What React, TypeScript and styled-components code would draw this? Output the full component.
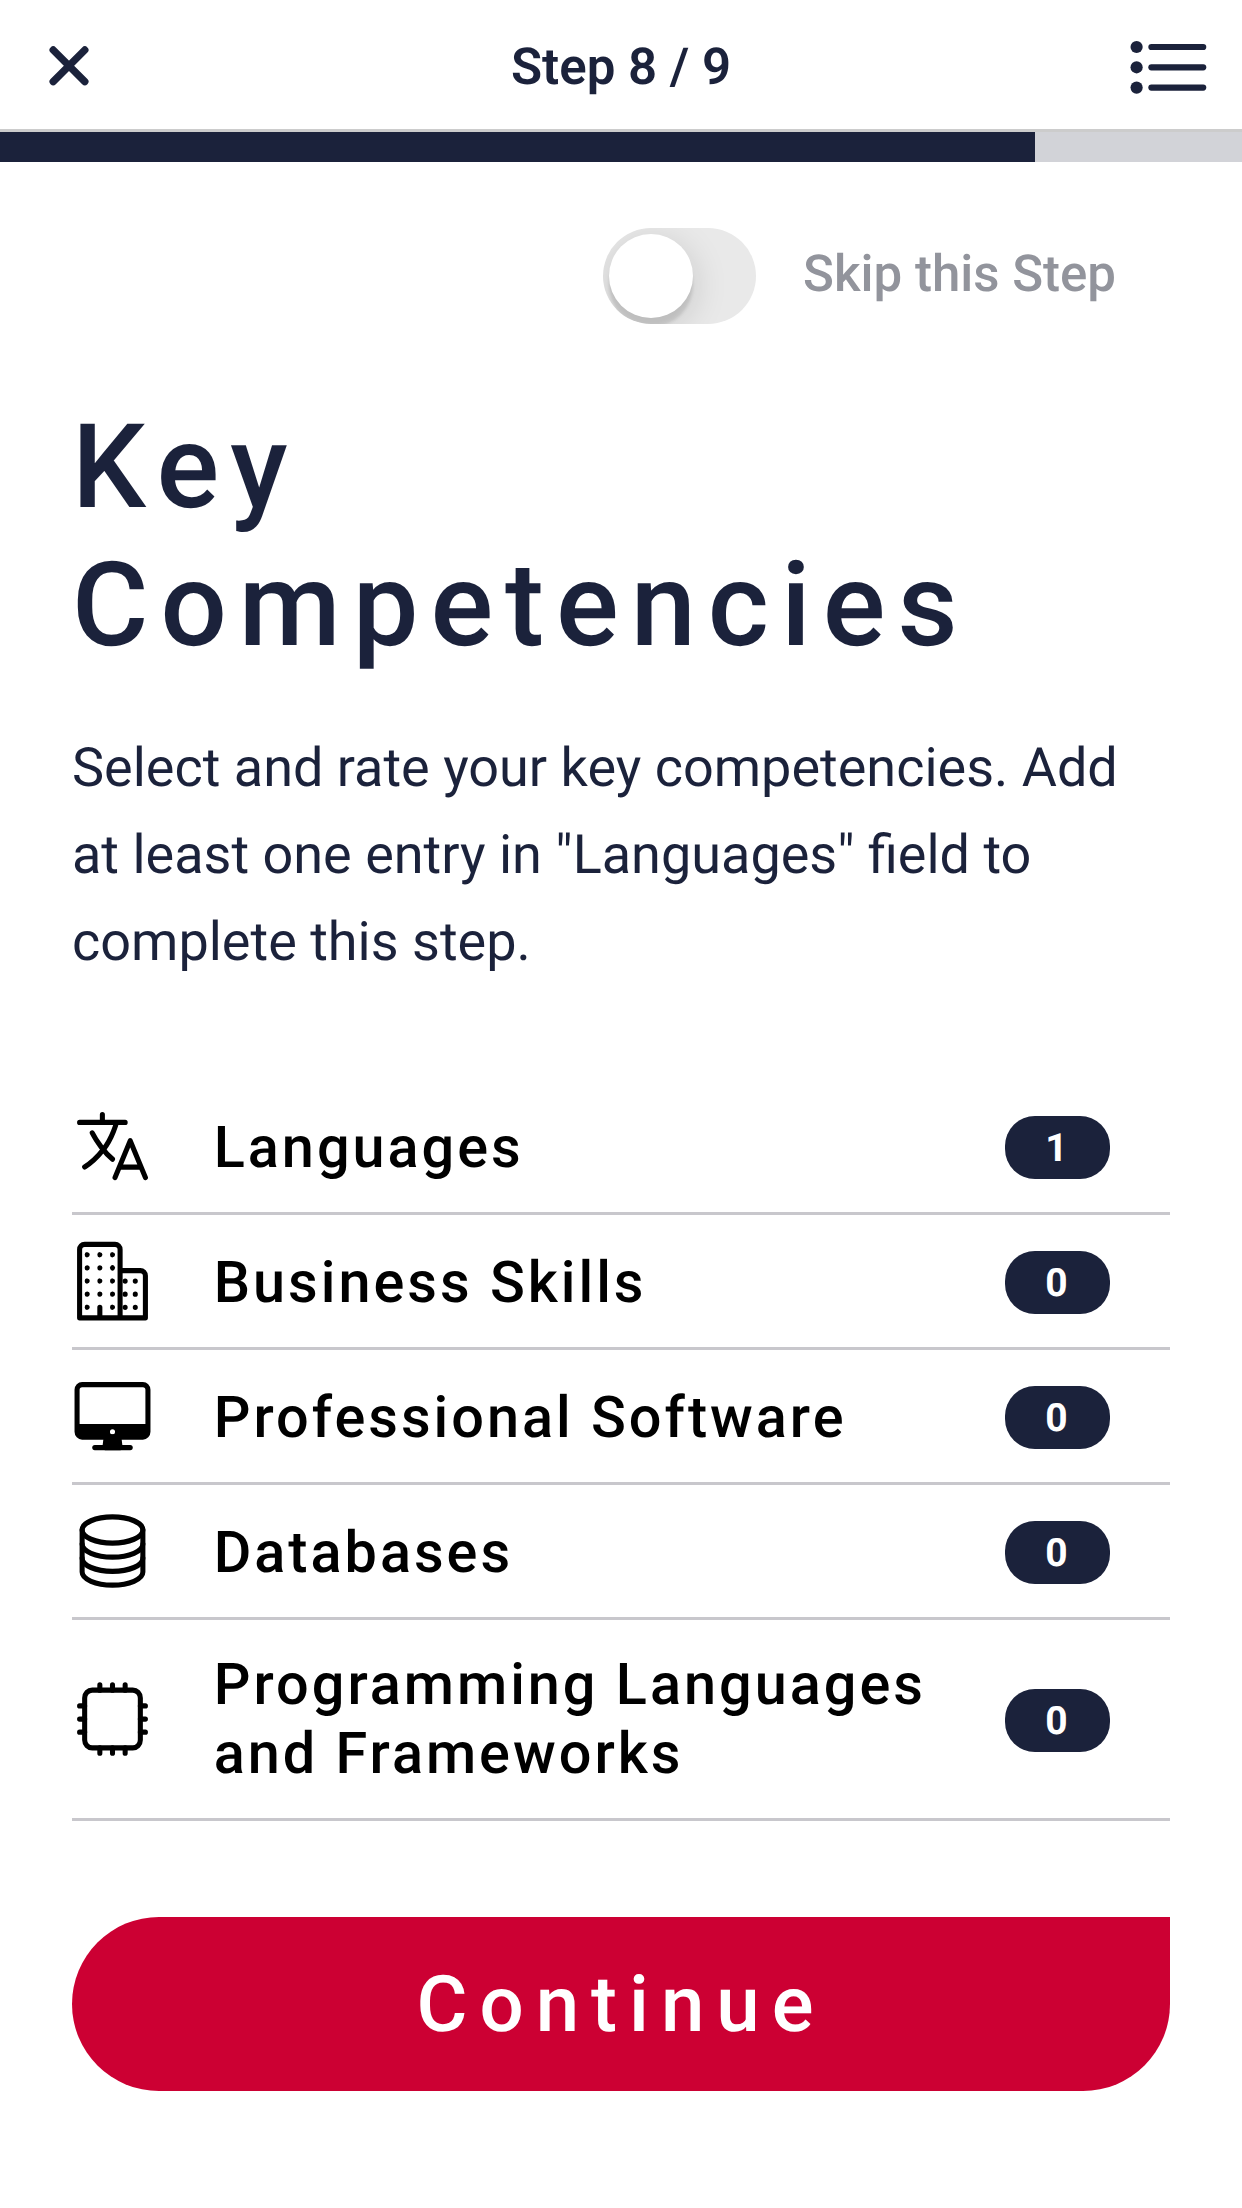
import React from "react";
import styled, { createGlobalStyle } from "styled-components";
import {
  IoLanguageOutline,
  IoBusinessOutline,
  IoDesktopOutline,
  IoServerOutline,
} from "react-icons/io5";

const navy = "#1b223b";
const line = "#c8c7cc";

const GlobalStyle = createGlobalStyle`
  * { box-sizing: border-box; }
  body {
    margin: 0;
    background: #fff;
    font-family: Roboto, "Liberation Sans", sans-serif;
    text-rendering: geometricPrecision;
    color: ${navy};
  }
`;

const Screen = styled.div`
  display: flex;
  flex-direction: column;
  width: 1242px;
  height: 2208px;
  background: #fff;
`;

const Header = styled.header`
  display: flex;
  align-items: center;
  justify-content: space-between;
  height: 132px;
  padding: 4px 33px 0 48px;
  border-bottom: 3px solid #cccccc;
`;

const HeaderTitle = styled.h1`
  margin: 2px 0 0;
  font-size: 51px;
  line-height: 59px;
  font-weight: 600;
`;

const IconButton = styled.button<{ $end?: boolean }>`
  display: flex;
  justify-content: ${(p) => (p.$end ? "flex-end" : "flex-start")};
  width: ${(p) => (p.$end ? 96 : 81)}px;
  padding: 0;
  border: 0;
  background: none;
  color: ${navy};
`;

const Progress = styled.div`
  height: 30px;
  background: #d2d3d8;
`;

const ProgressFill = styled.div`
  height: 100%;
  background: ${navy};
`;

const Content = styled.main`
  display: flex;
  flex-direction: column;
  padding: 66px 72px 0;
`;

const SkipRow = styled.label`
  display: flex;
  align-items: center;
  align-self: flex-end;
  gap: 47px;
  height: 96px;
  padding-right: 54px;
`;

const Track = styled.span`
  display: flex;
  width: 153px;
  height: 96px;
  padding: 6px;
  border-radius: 48px;
  background: #e9e9e9;
  overflow: hidden;
`;

const Knob = styled.span`
  width: 84px;
  height: 84px;
  border-radius: 50%;
  background: #fff;
  box-shadow: 0 9px 36px rgba(0, 0, 0, 0.16), 0 9px 3px rgba(0, 0, 0, 0.1);
`;

const SkipLabel = styled.span`
  margin-bottom: 3px;
  font-size: 51px;
  line-height: 59px;
  font-weight: 500;
  color: #92949c;
`;

const Title = styled.h2`
  margin: 74px 0 0;
  font-size: 117px;
  line-height: 138px;
  font-weight: 500;
  letter-spacing: 12px;
`;

const Intro = styled.p`
  margin: 51px 0 0;
  font-size: 54px;
  line-height: 87px;
  font-weight: 400;
`;

const List = styled.ul`
  display: flex;
  flex-direction: column;
  margin: 94px 0 0;
  padding: 0;
  list-style: none;
`;

const Row = styled.li<{ $tall?: boolean }>`
  display: flex;
  align-items: center;
  height: ${(p) => (p.$tall ? 201 : 135)}px;
  padding-right: 60px;
  border-bottom: 3px solid ${line};
  color: #000;
`;

const IconSlot = styled.span`
  display: flex;
  margin-right: 60.7px;

  svg {
    flex: none;
    width: 81px;
    height: 84px;
  }
`;

const RowLabel = styled.span<{ $tall?: boolean }>`
  flex: 1;
  padding-top: ${(p) => (p.$tall ? 2 : 5)}px;
  font-size: 57.6px;
  line-height: 69px;
  font-weight: 500;
  letter-spacing: 3px;
`;

const Badge = styled.span`
  display: flex;
  align-items: center;
  justify-content: center;
  width: 105px;
  height: 63px;
  margin-top: 3px;
  padding: 1px 2px 0 0;
  border-radius: 30px;
  background: ${navy};
  color: #fff;
  font-size: 39px;
  line-height: 39px;
  font-weight: 700;
`;

const Continue = styled.button`
  height: 174px;
  margin-top: 96px;
  padding: 2px 0 0;
  border: 0;
  border-radius: 87px 0 87px 87px;
  background: #cc0033;
  color: #fff;
  font-family: inherit;
  font-size: 78px;
  font-weight: 500;
  letter-spacing: 12px;
  text-rendering: inherit;
`;

const CloseIcon = () => (
  <svg width="43" height="43" viewBox="0 0 43 43" fill="none" stroke="currentColor" strokeWidth="7.4" strokeLinecap="round">
    <path d="M5.2 5 36.8 36.6M36.8 5 5.2 36.6" />
  </svg>
);

const MenuIcon = () => (
  <svg width="81" height="55" viewBox="0 0 81 55" fill="currentColor">
    {[8, 28.3, 48.6].map((y) => (
      <g key={y}>
        <circle cx="8.6" cy={y} r="6.1" />
        <rect x="20.3" y={y - 3.1} width="58" height="6.2" rx="3.1" />
      </g>
    ))}
  </svg>
);

const ChipIcon = () => (
  <svg viewBox="0 0 512 512" preserveAspectRatio="none" fill="none" stroke="currentColor" strokeWidth="32" strokeLinecap="round" strokeLinejoin="round">
    <rect x="80" y="80" width="352" height="352" rx="48" />
    <path d="M256 80V48M336 80V48M176 80V48M256 464v-32M336 464v-32M176 464v-32M432 256h32M432 336h32M432 176h32M48 256h32M48 336h32M48 176h32" />
  </svg>
);

const rows = [
  { label: "Languages", count: 1, icon: <IoLanguageOutline preserveAspectRatio="none" /> },
  { label: "Business Skills", count: 0, icon: <IoBusinessOutline preserveAspectRatio="none" /> },
  { label: "Professional Software", count: 0, icon: <IoDesktopOutline preserveAspectRatio="none" /> },
  { label: "Databases", count: 0, icon: <IoServerOutline preserveAspectRatio="none" /> },
  { label: "Programming Languages and Frameworks", count: 0, icon: <ChipIcon />, tall: true },
];

const step = 8;
const steps = 9;
const progress = 5 / 6;

export default function App() {
  return (
    <>
      <GlobalStyle />
      <Screen>
        <Header>
          <IconButton aria-label="Close">
            <CloseIcon />
          </IconButton>
          <HeaderTitle>
            Step {step} / {steps}
          </HeaderTitle>
          <IconButton aria-label="All steps" $end>
            <MenuIcon />
          </IconButton>
        </Header>
        <Progress>
          <ProgressFill style={{ width: `${progress * 100}%` }} />
        </Progress>
        <Content>
          <SkipRow>
            <Track>
              <Knob />
            </Track>
            <SkipLabel>Skip this Step</SkipLabel>
          </SkipRow>
          <Title>Key Competencies</Title>
          <Intro>
            Select and rate your key competencies. Add at least one entry in
            "Languages" field to complete this step.
          </Intro>
          <List>
            {rows.map((row) => (
              <Row key={row.label} $tall={row.tall}>
                <IconSlot>{row.icon}</IconSlot>
                <RowLabel $tall={row.tall}>{row.label}</RowLabel>
                <Badge>{row.count}</Badge>
              </Row>
            ))}
          </List>
          <Continue>Continue</Continue>
        </Content>
      </Screen>
    </>
  );
}
